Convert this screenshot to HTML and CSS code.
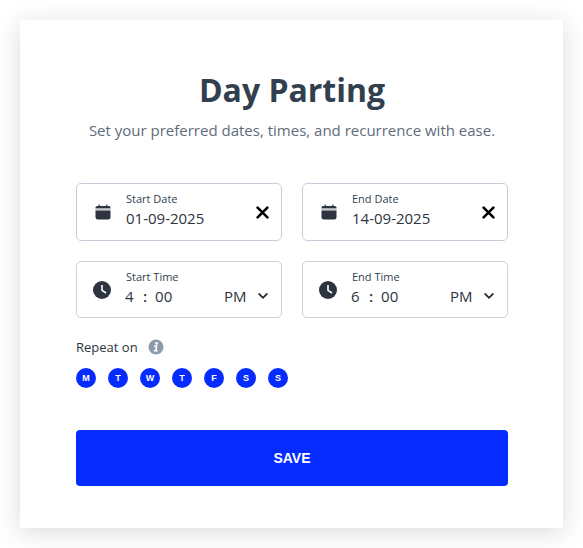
FILE: index.html
```html
<!DOCTYPE html>
<html lang="en">
<head>
  <meta charset="UTF-8">
  <meta name="viewport" content="width=device-width, initial-scale=1.0">
  <title>Day Parting</title>
  <link rel="stylesheet" href="styles.css">
</head>
<body>

  <svg class="sprite" aria-hidden="true">
    <symbol id="calendar" viewBox="0 0 16 16">
      <path fill="currentColor" d="M0.5 4.6V3.6Q0.5 2 2.1 2H3.6V0.5H4.8V2H11.2V0.5H12.4V2H13.9Q15.5 2 15.5 3.6V4.6Z"/>
      <path fill="#c5c7ca" d="M0.5 4.6H15.5V6.4H0.5Z"/>
      <path fill="currentColor" d="M0.5 6.4H15.5V13Q15.5 15.5 13 15.5H3Q0.5 15.5 0.5 13Z"/>
    </symbol>
    <symbol id="clock" viewBox="0 0 18 18">
      <circle cx="9" cy="9" r="9" fill="currentColor"/>
      <path d="M9 4V9.3L13 12" fill="none" stroke="#fff" stroke-width="1.6"/>
    </symbol>
    <symbol id="cross" viewBox="0 0 12 12">
      <path d="M1.5 1.5L10.5 10.5M10.5 1.5L1.5 10.5" fill="none" stroke="#000" stroke-width="2.4" stroke-linecap="round"/>
    </symbol>
    <symbol id="chevron" viewBox="0 0 10 6">
      <path d="M1.2 1L5 4.8L8.8 1" fill="none" stroke="currentColor" stroke-width="1.8" stroke-linecap="round"/>
    </symbol>
  </svg>

  <form class="card">
    <header class="card-header">
      <h1>Day Parting</h1>
      <p>Set your preferred dates, times, and recurrence with ease.</p>
    </header>

    <div class="fields">
      <div class="field date-field">
        <svg class="field-icon"><use href="#calendar"/></svg>
        <div class="field-body">
          <label for="start-date">Start Date</label>
          <input type="text" id="start-date" value="01-09-2025">
        </div>
        <button type="button" class="clear-btn" aria-label="Clear start date"><svg><use href="#cross"/></svg></button>
      </div>

      <div class="field date-field">
        <svg class="field-icon"><use href="#calendar"/></svg>
        <div class="field-body">
          <label for="end-date">End Date</label>
          <input type="text" id="end-date" value="14-09-2025">
        </div>
        <button type="button" class="clear-btn" aria-label="Clear end date"><svg><use href="#cross"/></svg></button>
      </div>

      <div class="field time-field">
        <svg class="field-icon"><use href="#clock"/></svg>
        <div class="field-body">
          <label for="start-hour">Start Time</label>
          <div class="time">
            <input type="text" id="start-hour" class="hour" value="4">
            <span>:</span>
            <input type="text" class="minute" aria-label="Start minutes" value="00">
          </div>
        </div>
        <div class="period">
          <select aria-label="Start AM or PM">
            <option>AM</option>
            <option selected>PM</option>
          </select>
          <svg><use href="#chevron"/></svg>
        </div>
      </div>

      <div class="field time-field">
        <svg class="field-icon"><use href="#clock"/></svg>
        <div class="field-body">
          <label for="end-hour">End Time</label>
          <div class="time">
            <input type="text" id="end-hour" class="hour" value="6">
            <span>:</span>
            <input type="text" class="minute" aria-label="End minutes" value="00">
          </div>
        </div>
        <div class="period">
          <select aria-label="End AM or PM">
            <option>AM</option>
            <option selected>PM</option>
          </select>
          <svg><use href="#chevron"/></svg>
        </div>
      </div>
    </div>

    <div class="repeat">
      <span>Repeat on</span>
      <svg class="info" viewBox="0 0 16 16" aria-hidden="true">
        <circle cx="8" cy="8" r="7.5" fill="#8c9bab"/>
        <circle cx="8.6" cy="4.4" r="1.3" fill="#fff"/>
        <path d="M6 7H8.6L7.8 11.8H9.8M5.8 11.8H8" fill="none" stroke="#fff" stroke-width="1.6"/>
      </svg>
    </div>

    <div class="days">
      <button type="button" aria-label="Monday">M</button>
      <button type="button" aria-label="Tuesday">T</button>
      <button type="button" aria-label="Wednesday">W</button>
      <button type="button" aria-label="Thursday">T</button>
      <button type="button" aria-label="Friday">F</button>
      <button type="button" aria-label="Saturday">S</button>
      <button type="button" aria-label="Sunday">S</button>
    </div>

    <button type="submit" class="save-btn">SAVE</button>
  </form>

</body>
</html>
```
FILE: styles.css
```css
* {
    box-sizing: border-box;
}

body {
    margin: 0;
    padding: 20px;
    background-color: #fff;
    color: #2d3440;
    font-family: "Open Sans", sans-serif;
}

.sprite {
    display: none;
}

.card {
    max-width: 640px;
    margin: 0 auto;
    padding: 48px 55px 42px 56px;
    background-color: #fff;
    box-shadow: 0 4px 24px rgba(0, 0, 0, 0.15);
}

.card-header {
    margin-bottom: 41px;
    text-align: center;
}

.card-header h1 {
    margin: 0;
    color: #323f4e;
    font-size: 32px;
    line-height: 44px;
    font-weight: 700;
}

.card-header p {
    margin: 6px 0 0;
    color: #5f6c7b;
    font-size: 15px;
    line-height: 24px;
}

.fields {
    display: grid;
    grid-template-columns: 1fr 1fr;
    gap: 20px;
}

.field {
    display: flex;
    align-items: center;
    min-width: 0;
    border-radius: 5px;
}

.date-field {
    min-height: 58px;
    padding: 0 12px 0 18px;
    border: 1px solid #c8cddb;
}

.time-field {
    min-height: 57px;
    padding: 0 13px 0 16px;
    border: 1px solid #cfd1d3;
}

.field-icon {
    flex: none;
    width: 16px;
    height: 16px;
    margin-right: 15px;
}

.time-field .field-icon {
    width: 18px;
    height: 18px;
}

.field-body {
    flex: 1;
    min-width: 0;
    padding-bottom: 4px;
}

.field label {
    display: block;
    color: #323f4e;
    font-size: 11px;
    line-height: 16px;
}

.field input,
.field select {
    display: block;
    height: 22px;
    padding: 0;
    border: none;
    outline: none;
    background: none;
    color: #2d3440;
    font-family: inherit;
    font-size: 15px;
    line-height: 22px;
}

.date-field input {
    width: 100%;
}

.time {
    display: flex;
    gap: 8px;
    margin-left: -1px;
    font-size: 15px;
    line-height: 22px;
}

.time span {
    font-weight: 600;
}

.time .hour {
    width: 10px;
}

.time .minute {
    width: 20px;
}

.clear-btn {
    flex: none;
    padding: 0;
    border: none;
    background: none;
    cursor: pointer;
}

.clear-btn svg {
    display: block;
    width: 13px;
    height: 13px;
}

.period {
    display: flex;
    align-items: center;
    gap: 11px;
    padding-top: 12px;
}

.period select {
    appearance: none;
    cursor: pointer;
}

.period svg {
    width: 10px;
    height: 6px;
}

.repeat {
    display: flex;
    align-items: center;
    gap: 10px;
    margin-top: 19px;
    font-size: 13px;
    line-height: 20px;
}

.info {
    width: 16px;
    height: 16px;
}

.days {
    display: flex;
    gap: 12px;
    margin-top: 11px;
}

.days button {
    width: 20px;
    height: 20px;
    padding: 0;
    border: none;
    border-radius: 50%;
    background-color: #062bff;
    color: #fff;
    font-family: "Liberation Sans", Arial, sans-serif;
    font-size: 9px;
    font-weight: 700;
    cursor: pointer;
}

.save-btn {
    display: block;
    width: 100%;
    height: 56px;
    margin-top: 42px;
    border: none;
    border-radius: 4px;
    background-color: #062bff;
    color: #fff;
    font-family: "Liberation Sans", Arial, sans-serif;
    font-size: 14px;
    font-weight: 700;
    cursor: pointer;
}

.save-btn:hover {
    background-color: #0022d6;
}
```
